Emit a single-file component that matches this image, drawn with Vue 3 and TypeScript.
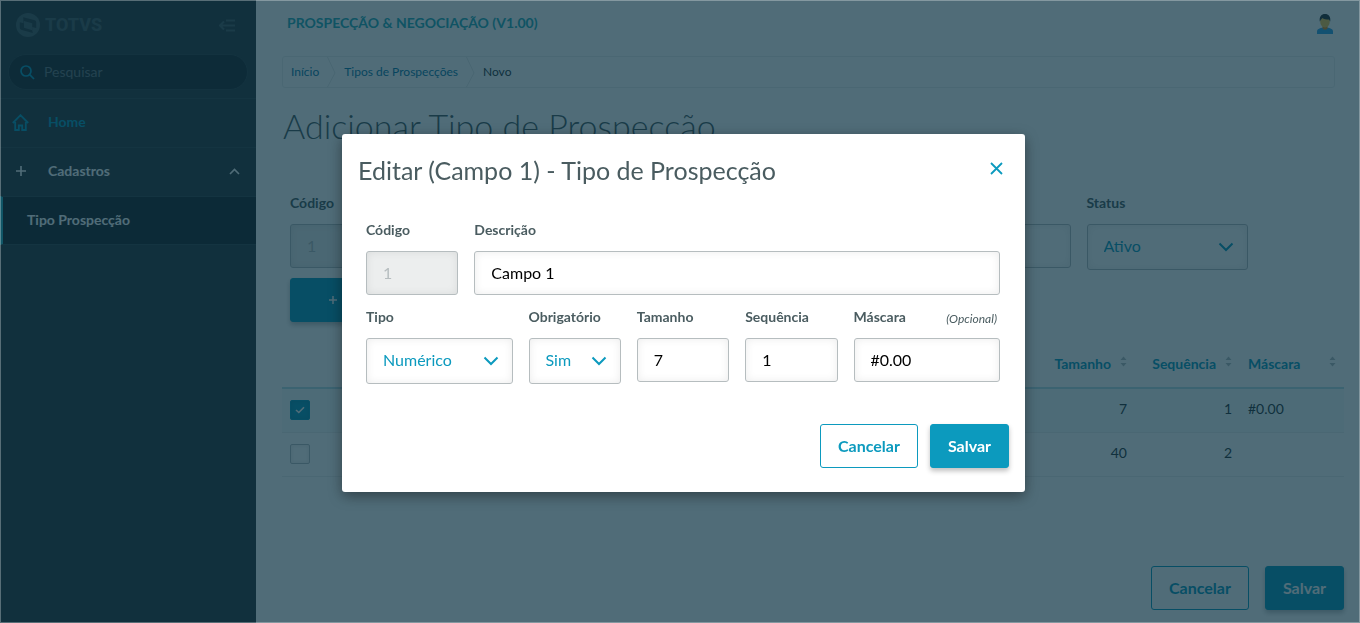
<script setup lang="ts">
import { ref } from 'vue'

interface Row {
  selected: boolean
  size: number
  order: number
  mask: string
}

const search = ref('')
const code = ref('1')
const description = ref('')
const status = ref('Ativo')

const rows = ref<Row[]>([
  { selected: true, size: 7, order: 1, mask: '#0.00' },
  { selected: false, size: 40, order: 2, mask: '' },
])

const field = ref({
  code: '1',
  description: 'Campo 1',
  type: 'Numérico',
  required: 'Sim',
  size: '7',
  order: '1',
  mask: '#0.00',
})
</script>

<template>
  <div class="app">
    <aside class="sidebar">
      <div class="brand">
        <div class="logo">
          <svg width="24" height="24" viewBox="0 0 24 24" aria-hidden="true">
            <circle cx="12" cy="12" r="12" fill="currentColor" />
            <path class="logo-hole" d="M7.200 4.200L18.800 7.200Q20.200 7.700 20.200 9V15L16.200 14V17.300L16.800 20L5.200 16.700Q3.800 16.200 3.800 15V9.200L7.600 10.200Z" />
            <path d="M8 8L16.200 10.300V17.300L8 14.800Z" fill="currentColor" />
          </svg>
          <span>TOTVS</span>
        </div>
        <button class="icon-button" type="button" aria-label="Recolher menu">
          <svg width="17" height="13" viewBox="0 0 17 13" fill="none" stroke="currentColor" stroke-width="2">
            <path d="M7 1.5H16M5 6.5H16M7 11.5H16M1 6.5H6M5 2.5L1 6.5L5 10.5" />
          </svg>
        </button>
      </div>
      <label class="search">
        <svg width="15" height="15" viewBox="0 0 15 15" fill="none" stroke="currentColor" stroke-width="1.7">
          <circle cx="6" cy="6" r="5" />
          <path d="M9.7 9.7L14 14" />
        </svg>
        <input v-model="search" type="text" placeholder="Pesquisar" aria-label="Pesquisar" />
      </label>
      <nav class="menu">
        <a class="item home" href="#">
          <svg width="17" height="17" viewBox="0 0 17 17" fill="none" stroke="currentColor" stroke-width="1.8">
            <path d="M0.8 9L8.5 1.200L16.2 9M3.200 8V16H6.8V11.5H10.2V16H13.800V8" />
          </svg>
          <span>Home</span>
        </a>
        <a class="item group" href="#">
          <svg class="plus" width="10" height="10" viewBox="0 0 10 10" fill="none" stroke="currentColor" stroke-width="1.6">
            <path d="M5 0V10M0 5H10" />
          </svg>
          <span>Cadastros</span>
          <svg class="caret" width="11" height="7" viewBox="0 0 11 7" fill="none" stroke="currentColor" stroke-width="1.6">
            <path d="M1 6L5.5 1.5L10 6" />
          </svg>
        </a>
        <a class="item active" href="#">Tipo Prospecção</a>
      </nav>
    </aside>

    <main class="main">
      <header class="topbar">
        <strong class="system">PROSPECÇÃO &amp; NEGOCIAÇÃO (V1.00)</strong>
        <svg class="avatar" width="16" height="20" viewBox="0 0 16 20" role="img" aria-label="Usuário">
          <path d="M0 20V17.5C0 14.5 4 13.5 8 13.5S16 14.5 16 17.5V20Z" fill="#35a3e8" />
          <path d="M5.5 11H10.5V14.5Q8 17 5.5 14.5Z" fill="#e08a1e" />
          <ellipse cx="8" cy="7.5" rx="4.8" ry="6" fill="#f2c14e" />
          <path d="M2.8 7.5C2 2.500 4.500 0 8 0S14 2.500 13.200 7.500L12 5.500C9.500 5.500 6.500 5 5.500 4L4 5.500Z" fill="#2b2f33" />
        </svg>
      </header>

      <nav class="crumbs" aria-label="Navegação">
        <a href="#">Início</a>
        <svg width="9" height="30" viewBox="0 0 9 30" fill="none" stroke="currentColor"><path d="M0.500 0L8 16L0.500 30" /></svg>
        <a href="#">Tipos de Prospecções</a>
        <svg width="9" height="30" viewBox="0 0 9 30" fill="none" stroke="currentColor"><path d="M0.500 0L8 16L0.500 30" /></svg>
        <span>Novo</span>
      </nav>

      <h1 class="page-title">Adicionar Tipo de Prospecção</h1>

      <form class="page-form" @submit.prevent>
        <div class="field span-2">
          <label for="code">Código</label>
          <input id="code" v-model="code" class="box" type="text" disabled />
        </div>
        <div class="field span-7 unlabelled">
          <input v-model="description" class="box" type="text" aria-label="Descrição" />
        </div>
        <div class="field span-2">
          <label for="status">Status</label>
          <div class="select">
            <select id="status" v-model="status" class="box">
              <option>Ativo</option>
            </select>
            <svg width="16" height="10" viewBox="0 0 16 10"><path d="M1.500 1.500L8 8L14.500 1.500" /></svg>
          </div>
        </div>
      </form>
      <div class="actions">
        <button class="btn primary add" type="button" aria-label="Adicionar">
          <svg width="8" height="8" viewBox="0 0 8 8" fill="none" stroke="currentColor" stroke-width="1.500"><path d="M4 0V8M0 4H8" /></svg>
        </button>
      </div>

      <table class="table">
        <colgroup>
          <col />
          <col class="col-size" />
          <col class="col-order" />
          <col class="col-mask" />
        </colgroup>
        <thead>
          <tr>
            <th></th>
            <th v-for="name in ['Tamanho', 'Sequência', 'Máscara']" :key="name" scope="col">
              <div class="head">
                <span>{{ name }}</span>
                <svg width="7" height="11" viewBox="0 0 7 11"><path d="M0.500 4L3.500 0.500L6.500 4ZM0.500 7L3.500 10.500L6.500 7Z" /></svg>
              </div>
            </th>
          </tr>
        </thead>
        <tbody>
          <tr v-for="row in rows" :key="row.order" :class="{ selected: row.selected }">
            <td>
              <label class="check">
                <input v-model="row.selected" type="checkbox" :aria-label="`Selecionar campo ${row.order}`" />
                <svg v-if="row.selected" width="10" height="8" viewBox="0 0 10 8"><path d="M1 4L3.800 6.500L9 1.200" /></svg>
              </label>
            </td>
            <td class="value number">{{ row.size }}</td>
            <td class="value number">{{ row.order }}</td>
            <td class="value">{{ row.mask }}</td>
          </tr>
        </tbody>
      </table>

      <footer class="footer">
        <button class="btn outline" type="button">Cancelar</button>
        <button class="btn primary" type="button">Salvar</button>
      </footer>
    </main>

    <div class="overlay">
      <section class="modal" role="dialog" aria-modal="true" aria-labelledby="modal-title">
        <header class="modal-head">
          <h2 id="modal-title">Editar (Campo 1) - Tipo de Prospecção</h2>
          <button class="icon-button close" type="button" aria-label="Fechar">
            <svg width="13" height="13" viewBox="0 0 13 13" fill="none" stroke="currentColor" stroke-width="1.800">
              <path d="M1 1L12 12M12 1L1 12" />
            </svg>
          </button>
        </header>
        <form class="modal-form" @submit.prevent>
          <div class="field span-2">
            <label for="m-code">Código</label>
            <input id="m-code" v-model="field.code" class="box" type="text" disabled />
          </div>
          <div class="field span-10">
            <label for="m-description">Descrição</label>
            <input id="m-description" v-model="field.description" class="box" type="text" />
          </div>
          <div class="field span-3">
            <label for="m-type">Tipo</label>
            <div class="select">
              <select id="m-type" v-model="field.type" class="box">
                <option>Numérico</option>
              </select>
              <svg width="16" height="10" viewBox="0 0 16 10"><path d="M1.500 1.500L8 8L14.500 1.500" /></svg>
            </div>
          </div>
          <div class="field span-2">
            <label for="m-required">Obrigatório</label>
            <div class="select">
              <select id="m-required" v-model="field.required" class="box">
                <option>Sim</option>
              </select>
              <svg width="16" height="10" viewBox="0 0 16 10"><path d="M1.500 1.500L8 8L14.500 1.500" /></svg>
            </div>
          </div>
          <div class="field span-2">
            <label for="m-size">Tamanho</label>
            <input id="m-size" v-model="field.size" class="box" type="text" />
          </div>
          <div class="field span-2">
            <label for="m-order">Sequência</label>
            <input id="m-order" v-model="field.order" class="box" type="text" />
          </div>
          <div class="field span-3">
            <div class="label-row">
              <label for="m-mask">Máscara</label>
              <em>(Opcional)</em>
            </div>
            <input id="m-mask" v-model="field.mask" class="box" type="text" />
          </div>
        </form>
        <footer class="modal-foot">
          <button class="btn outline" type="button">Cancelar</button>
          <button class="btn primary" type="button">Salvar</button>
        </footer>
      </section>
    </div>
    <div class="edge"></div>
  </div>
</template>

<style>
body {
  margin: 0;
}
</style>

<style scoped>
* {
  box-sizing: border-box;
}

.app {
  --primary: #0c9abe;
  --text: #4a5c60;
  display: flex;
  min-height: 100vh;
  background: #fff;
  color: var(--text);
  font-family: Lato, "Open Sans", sans-serif;
  font-size: 14px;
  line-height: 20px;
}

a {
  color: inherit;
  text-decoration: none;
}

button,
input,
select {
  font: inherit;
}

.icon-button {
  display: flex;
  padding: 0;
  border: 0;
  background: none;
  color: inherit;
}

/* Side menu */
.sidebar {
  flex: 0 0 256px;
  background: #2c3739;
}

.brand {
  display: flex;
  justify-content: space-between;
  align-items: center;
  height: 50px;
  padding: 0 20px 0 16px;
  color: #4c5a60;
}

.logo {
  display: flex;
  align-items: center;
  gap: 5px;
  font-family: "Liberation Sans Narrow", Roboto, sans-serif;
  font-size: 18px;
  font-weight: 800;
}

.logo-hole {
  fill: #2c3739;
}

.search {
  display: flex;
  align-items: center;
  gap: 9px;
  height: 36px;
  margin: 4px 8px 8px;
  padding: 0 11px;
  border: 1px solid #343f42;
  border-radius: 18px;
  background: #1f262b;
  color: var(--primary);
}

.search input {
  flex: 1;
  min-width: 0;
  padding: 0;
  border: 0;
  outline: 0;
  background: none;
  color: #fff;
}

.search input::placeholder {
  color: #6a7478;
  opacity: 1;
}

.item {
  display: flex;
  align-items: center;
  height: 49px;
  padding: 0 16px 2px 12px;
  border-top: 1px solid #384447;
  font-weight: 700;
}

.item span {
  flex: 1;
}

.home {
  gap: 19px;
  color: var(--primary);
}

.group {
  color: #fff;
}

.group .plus {
  margin: 0 22px 0 4px;
}

.active {
  padding-left: 24px;
  border-bottom: 1px solid #384447;
  border-left: 3px solid #29b6c5;
  background: #1d2426;
  color: #fff;
}

/* Page */
.main {
  display: flex;
  flex: 1;
  flex-direction: column;
  min-width: 0;
  padding: 0 16px 13px 26px;
}

.topbar {
  display: flex;
  justify-content: space-between;
  align-items: center;
  height: 48px;
  padding: 0 11px 0 5px;
}

.system {
  padding-bottom: 2px;
  color: #2bacba;
}

.crumbs {
  display: flex;
  align-items: center;
  gap: 8px;
  height: 32px;
  margin: 8px 9px 0 0;
  padding-left: 8px;
  border: 1px solid #eceeee;
  border-radius: 3px;
  color: #e6e9e9;
  font-size: 12px;
}

.crumbs a {
  color: #0c7ba8;
}

.crumbs span {
  color: #2c3739;
}

.page-title {
  margin: 14px 0 0 1px;
  font-size: 34px;
  font-weight: 300;
  line-height: 48px;
}

.page-form,
.modal-form {
  display: grid;
  grid-template-columns: repeat(12, 1fr);
  gap: 12px 16px;
}

.page-form {
  margin: 43px 8px 0;
}

.field {
  display: flex;
  flex-direction: column;
  gap: 11px;
  min-width: 0;
}

.field label {
  font-weight: 700;
}

.unlabelled {
  padding-top: 31px;
}

.span-2 {
  grid-column: span 2;
}

.span-3 {
  grid-column: span 3;
}

.span-7 {
  grid-column: span 7;
}

.span-10 {
  grid-column: span 10;
}

.box {
  width: 100%;
  height: 44px;
  padding: 0 16px 2px;
  border: 1px solid #b6bdbf;
  border-radius: 3px;
  outline: 0;
  background: #fff;
  box-shadow: inset 0 0 8px rgba(0, 0, 0, 0.08);
  color: #000;
  font-size: 16px;
}

.box:disabled {
  background: #eceeee;
  color: #b6bdbf;
}

.select {
  position: relative;
}

.select .box {
  display: block;
  height: 46px;
  appearance: none;
  color: var(--primary);
}

.select svg {
  position: absolute;
  top: 18px;
  right: 14px;
  fill: none;
  stroke: var(--primary);
  stroke-width: 2;
  pointer-events: none;
}

.actions {
  display: grid;
  grid-template-columns: repeat(6, 1fr);
  gap: 16px;
  margin: 8px 8px 0;
}

.btn {
  height: 44px;
  padding: 0 17px;
  border: 1px solid var(--primary);
  border-radius: 3px;
  background: #fff;
  color: var(--primary);
  font-size: 16px;
  font-weight: 700;
}

.primary {
  background: var(--primary);
  box-shadow: 0 3px 5px rgba(0, 0, 0, 0.25);
  color: #fff;
}

.add {
  display: flex;
  align-items: center;
  padding-left: 38px;
}

.table {
  width: 100%;
  margin-top: 21px;
  border-collapse: collapse;
  table-layout: fixed;
  color: #2c3739;
}

.col-size {
  width: 106px;
}

.col-order {
  width: 105px;
}

.col-mask {
  width: 104px;
}

.table th {
  height: 45px;
  padding: 0 8px 2px;
  border-bottom: 2px solid #b8dfe8;
  color: var(--primary);
  text-align: left;
}

.head {
  display: flex;
  justify-content: flex-end;
  gap: 9px;
}

th:last-child .head {
  justify-content: space-between;
}

.head svg {
  margin-top: 2px;
  fill: #b6bdbf;
}

.table td {
  height: 44px;
  padding: 0 8px;
  border-bottom: 1px solid #eceeee;
}

.table .selected td {
  background: #f5fbfb;
}

.table .value {
  padding-bottom: 2px;
}

.table .number {
  text-align: right;
}

.check {
  display: block;
  position: relative;
  width: 20px;
  height: 20px;
}

.check input {
  display: block;
  width: 20px;
  height: 20px;
  margin: 0;
  border: 1px solid #b6bdbf;
  border-radius: 2px;
  appearance: none;
  box-shadow: inset 0 0 4px rgba(0, 0, 0, 0.1);
}

.check input:checked {
  border-color: var(--primary);
  background: var(--primary);
}

.check svg {
  position: absolute;
  top: 6px;
  left: 5px;
  fill: none;
  stroke: #fff;
  stroke-width: 1.6;
}

.footer {
  display: flex;
  justify-content: flex-end;
  gap: 16px;
  margin-top: auto;
}

/* Dialog */
.overlay {
  position: fixed;
  inset: 0;
  display: grid;
  place-items: center;
  padding: 3px 0 0 7px;
  background: rgba(5, 45, 62, 0.7);
}

.modal {
  width: 683px;
  max-width: 100%;
  padding: 0 16px 24px;
  border-radius: 3px;
  background: #fff;
  box-shadow: 0 4px 14px rgba(0, 0, 0, 0.4);
}

.modal-head {
  display: flex;
  justify-content: space-between;
  align-items: flex-start;
  height: 86px;
  padding: 20px 6px 0 0;
}

.modal-head h2 {
  margin: 0;
  font-size: 25px;
  font-weight: 400;
  line-height: 32px;
}

.close {
  margin-top: 8px;
  color: var(--primary);
}

.modal-form {
  padding: 0 9px 0 8px;
}

.label-row {
  display: flex;
  justify-content: space-between;
  padding-right: 3px;
}

.label-row em {
  font-size: 12px;
  line-height: 24px;
  height: 20px;
}

.modal-foot {
  display: flex;
  justify-content: flex-end;
  gap: 12px;
  margin-top: 40px;
}

.edge {
  position: fixed;
  inset: 0;
  border: 1px solid rgba(255, 255, 255, 0.3);
  pointer-events: none;
}
</style>
